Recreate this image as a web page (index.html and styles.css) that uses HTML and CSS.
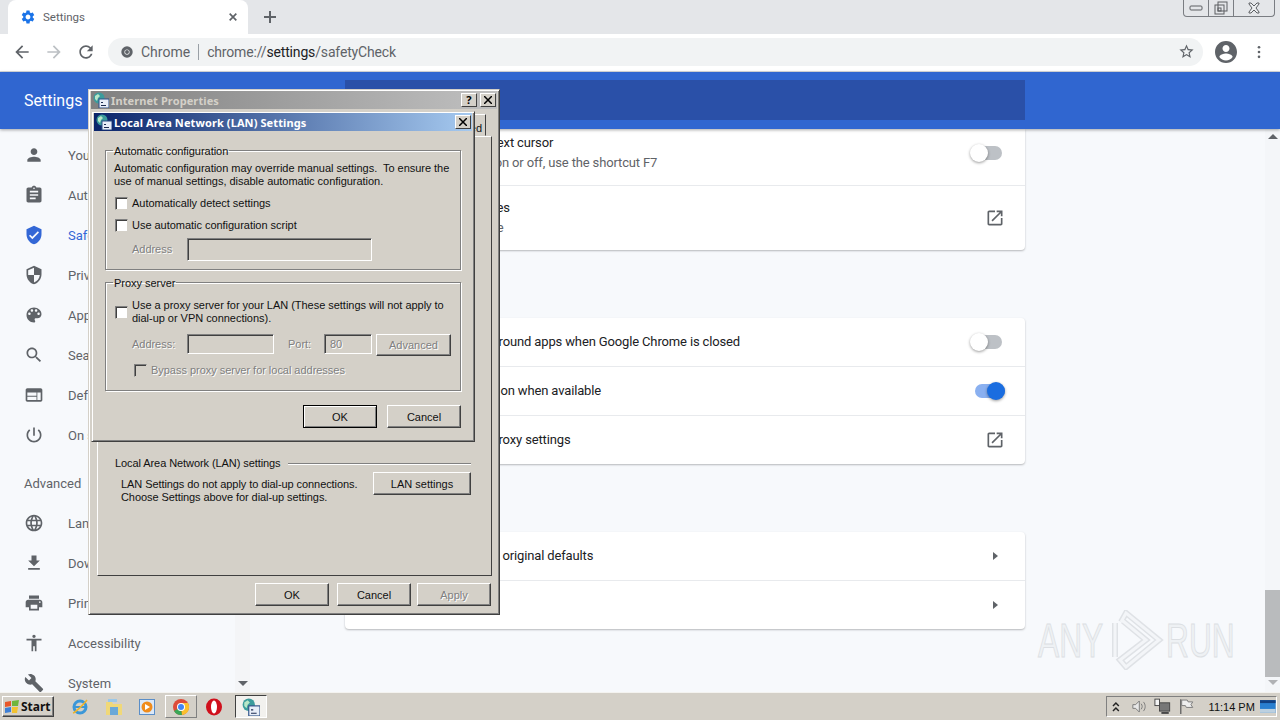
FILE: index.html
```html
<!DOCTYPE html>
<html>
<head>
    <title>Settings</title>
    <link rel="stylesheet" href="styles.css">
</head>
<body>
    <svg class="sprite">
        <symbol id="i-open" viewBox="0 0 24 24"><path d="M19 19H5V5h7V3H5c-1.11 0-2 .9-2 2v14c0 1.1.89 2 2 2h14c1.1 0 2-.9 2-2v-7h-2v7zM14 3v2h3.59l-9.83 9.83 1.41 1.41L19 6.41V10h2V3h-7z"/></symbol>
        <symbol id="i-winicon" viewBox="0 0 16 16">
            <circle cx="6" cy="6" r="5.5" fill="#3b9c9c"/>
            <path d="M2 4l3-2 2 2-2 2-1 3-2-2z" fill="#b8e6c8"/>
            <rect x="6" y="7" width="10" height="9" fill="#e8eef8" stroke="#2c4f86"/>
            <path d="M8 10h2v1H8zM8 13h5v1H8z" fill="#1c2c50"/>
        </symbol>
    </svg>

    <div class="tabstrip">
        <div class="tab">
            <svg class="tab-gear" viewBox="0 0 24 24"><path d="M19.14 12.94c.04-.3.06-.61.06-.94 0-.32-.02-.64-.07-.94l2.03-1.58c.18-.14.23-.41.12-.61l-1.92-3.32c-.12-.22-.37-.29-.59-.22l-2.39.96c-.5-.38-1.03-.7-1.62-.94l-.36-2.54c-.04-.24-.24-.41-.48-.41h-3.84c-.24 0-.43.17-.47.41l-.36 2.54c-.59.24-1.13.57-1.62.94l-2.39-.96c-.22-.08-.47 0-.59.22L2.74 8.87c-.12.21-.08.47.12.61l2.03 1.58c-.05.3-.09.63-.09.94s.02.64.07.94l-2.03 1.58c-.18.14-.23.41-.12.61l1.92 3.32c.12.22.37.29.59.22l2.39-.96c.5.38 1.03.7 1.62.94l.36 2.54c.05.24.24.41.48.41h3.84c.24 0 .44-.17.47-.41l.36-2.54c.59-.24 1.13-.56 1.62-.94l2.39.96c.22.08.47 0 .59-.22l1.92-3.32c.12-.22.07-.47-.12-.61l-2.01-1.58zM12 15.6c-1.98 0-3.6-1.62-3.6-3.6s1.62-3.6 3.6-3.6 3.6 1.62 3.6 3.6-1.62 3.6-3.6 3.6z"/></svg>
            <span class="tab-title">Settings</span>
            <svg class="tab-close" viewBox="0 0 12 12"><path d="M2 2l8 8M10 2l-8 8"/></svg>
        </div>
        <svg class="tab-new" viewBox="0 0 14 14"><path d="M7 1v12M1 7h12"/></svg>
        <div class="winctl">
            <div class="winctl-btn winctl-min"><svg viewBox="0 0 14 8"><rect x="1" y="2" width="12" height="4" rx="1"/></svg></div>
            <div class="winctl-btn winctl-res"><svg viewBox="0 0 14 14"><rect x="4" y="1" width="9" height="9"/><rect x="1" y="4" width="9" height="9"/><rect x="4" y="7" width="3" height="3"/></svg></div>
            <div class="winctl-btn winctl-cls"><svg viewBox="0 0 14 12"><path d="M2 1h2l3 3 3-3h2v1L9 6l3 4v1h-2L7 8l-3 3H2v-1l3-4-3-4z"/></svg></div>
        </div>
    </div>

    <div class="toolbar">
        <svg class="tb-icon" viewBox="0 0 24 24"><path d="M20 11H7.83l5.59-5.59L12 4l-8 8 8 8 1.41-1.41L7.83 13H20v-2z"/></svg>
        <svg class="tb-icon tb-off" viewBox="0 0 24 24"><path d="M12 4l-1.41 1.41L16.17 11H4v2h12.17l-5.58 5.59L12 20l8-8z"/></svg>
        <svg class="tb-icon" viewBox="0 0 24 24"><path d="M17.65 6.35C16.2 4.9 14.21 4 12 4c-4.42 0-7.99 3.58-7.99 8s3.57 8 7.99 8c3.73 0 6.84-2.55 7.73-6h-2.08c-.82 2.33-3.04 4-5.65 4-3.31 0-6-2.69-6-6s2.69-6 6-6c1.66 0 3.14.69 4.22 1.78L13 11h7V4l-2.35 2.35z"/></svg>
        <div class="omnibox">
            <svg class="omni-chrome" viewBox="0 0 16 16"><circle cx="8" cy="8" r="6.5" fill="#5f6368"/><circle cx="8" cy="8" r="3" fill="#f1f3f4"/><circle cx="8" cy="8" r="2.2" fill="#5f6368"/></svg>
            <span class="omni-label">Chrome</span>
            <span class="omni-sep"></span>
            <span class="omni-url">chrome://<b>settings</b>/safetyCheck</span>
            <svg class="omni-star" viewBox="0 0 24 24"><path d="M22 9.24l-7.19-.62L12 2 9.19 8.63 2 9.24l5.46 4.73L5.82 21 12 17.27 18.18 21l-1.63-7.03L22 9.24zM12 15.4l-3.76 2.27 1-4.28-3.32-2.88 4.38-.38L12 6.1l1.71 4.04 4.38.38-3.32 2.88 1 4.28L12 15.4z"/></svg>
        </div>
        <svg class="tb-avatar" viewBox="0 0 24 24"><path d="M12 1C5.9 1 1 5.9 1 12s4.900 11 11 11 11-4.900 11-11S18.100 1 12 1zm0 4c1.900 0 3.500 1.600 3.500 3.500S13.900 12 12 12s-3.500-1.600-3.500-3.500S10.100 5 12 5zm0 15.500c-2.700 0-5.200-1.400-6.600-3.500.1-2.200 4.400-3.400 6.600-3.400s6.500 1.200 6.600 3.400c-1.400 2.100-3.900 3.500-6.600 3.500z"/></svg>
        <svg class="tb-menu" viewBox="0 0 4 16"><circle cx="2" cy="2.500" r="1.500"/><circle cx="2" cy="8" r="1.500"/><circle cx="2" cy="13.500" r="1.500"/></svg>
    </div>

    <div class="header">
        <div class="header-title">Settings</div>
        <div class="header-search"></div>
    </div>

    <div class="page">
        <div class="sidebar">
            <div class="nav">
                <div class="nav-item"><svg viewBox="0 0 24 24"><path d="M12 12c2.210 0 4-1.790 4-4s-1.790-4-4-4-4 1.790-4 4 1.790 4 4 4zm0 2c-2.670 0-8 1.340-8 4v2h16v-2c0-2.660-5.330-4-8-4z"/></svg>You and Google</div>
                <div class="nav-item"><svg viewBox="0 0 24 24"><path d="M19 3h-4.180C14.400 1.840 13.300 1 12 1c-1.300 0-2.400.84-2.820 2H5c-1.100 0-2 .9-2 2v14c0 1.100.9 2 2 2h14c1.100 0 2-.9 2-2V5c0-1.100-.9-2-2-2zm-7 0c.55 0 1 .45 1 1s-.45 1-1 1-1-.45-1-1 .45-1 1-1zm2 14H7v-2h7v2zm3-4H7v-2h10v2zm0-4H7V7h10v2z"/></svg>Autofill</div>
                <div class="nav-item nav-active"><svg viewBox="0 0 24 24"><path d="M12 1L3 5v6c0 5.550 3.840 10.740 9 12 5.160-1.260 9-6.450 9-12V5l-9-4zm-2 16l-4-4 1.410-1.410L10 14.170l6.590-6.590L18 9l-8 8z"/></svg>Safety check</div>
                <div class="nav-item"><svg viewBox="0 0 24 24"><path d="M12 1L3 5v6c0 5.550 3.840 10.740 9 12 5.160-1.260 9-6.450 9-12V5l-9-4zm0 10.990h7c-.53 4.120-3.280 7.790-7 8.940V12H5V6.300l7-3.110v8.800z"/></svg>Privacy and security</div>
                <div class="nav-item"><svg viewBox="0 0 24 24"><path d="M12 3c-4.970 0-9 4.030-9 9s4.030 9 9 9c.83 0 1.500-.67 1.500-1.500 0-.39-.15-.74-.39-1.010-.23-.26-.38-.61-.38-.99 0-.83.67-1.500 1.500-1.500H16c2.760 0 5-2.240 5-5 0-4.420-4.030-8-9-8zm-5.500 9c-.83 0-1.500-.67-1.500-1.500S5.670 9 6.500 9 8 9.670 8 10.500 7.330 12 6.500 12zm3-4C8.670 8 8 7.330 8 6.500S8.670 5 9.500 5s1.500.67 1.500 1.500S10.330 8 9.500 8zm5 0c-.83 0-1.500-.67-1.500-1.500S13.670 5 14.500 5s1.500.67 1.500 1.500S15.330 8 14.500 8zm3 4c-.83 0-1.500-.67-1.500-1.500S16.670 9 17.500 9s1.500.67 1.500 1.500-.67 1.500-1.500 1.500z"/></svg>Appearance</div>
                <div class="nav-item"><svg viewBox="0 0 24 24"><path d="M15.500 14h-.79l-.28-.27C15.410 12.590 16 11.110 16 9.500 16 5.910 13.090 3 9.500 3S3 5.910 3 9.500 5.910 16 9.500 16c1.610 0 3.090-.59 4.230-1.570l.27.28v.79l5 4.990L20.490 19l-4.990-5zm-6 0C7.010 14 5 11.990 5 9.500S7.010 5 9.500 5 14 7.010 14 9.500 11.990 14 9.500 14z"/></svg>Search engine</div>
                <div class="nav-item"><svg viewBox="0 0 24 24"><path d="M20 4H4c-1.100 0-1.990.9-1.990 2L2 18c0 1.100.9 2 2 2h16c1.100 0 2-.9 2-2V6c0-1.100-.9-2-2-2zm-5 14H4v-4h11v4zm0-5H4V9h11v4zm5 5h-4V9h4v9z"/></svg>Default browser</div>
                <div class="nav-item"><svg viewBox="0 0 24 24"><path d="M13 3h-2v10h2V3zm4.830 2.170l-1.420 1.420C17.990 7.860 19 9.810 19 12c0 3.870-3.130 7-7 7s-7-3.130-7-7c0-2.190 1.010-4.140 2.580-5.420L6.170 5.170C4.230 6.820 3 9.260 3 12c0 4.970 4.030 9 9 9s9-4.030 9-9c0-2.740-1.230-5.180-3.170-6.830z"/></svg>On startup</div>
                <div class="nav-section">Advanced</div>
                <div class="nav-item"><svg viewBox="0 0 24 24"><path d="M11.990 2C6.470 2 2 6.480 2 12s4.470 10 9.990 10C17.520 22 22 17.520 22 12S17.520 2 11.990 2zm6.930 6h-2.950c-.32-1.250-.78-2.450-1.380-3.560 1.840.63 3.370 1.910 4.330 3.560zM12 4.040c.83 1.200 1.480 2.530 1.910 3.960h-3.820c.43-1.430 1.080-2.760 1.910-3.960zM4.260 14C4.100 13.360 4 12.690 4 12s.1-1.360.26-2h3.380c-.08.66-.14 1.320-.14 2 0 .68.06 1.340.14 2H4.260zm.82 2h2.950c.32 1.250.78 2.450 1.380 3.560-1.840-.63-3.370-1.900-4.330-3.560zm2.950-8H5.080c.96-1.660 2.490-2.930 4.330-3.560C8.810 5.550 8.350 6.750 8.030 8zM12 19.960c-.83-1.200-1.480-2.530-1.910-3.960h3.820c-.43 1.430-1.080 2.760-1.910 3.960zM14.340 14H9.660c-.09-.66-.16-1.320-.16-2 0-.68.07-1.350.16-2h4.680c.09.65.16 1.320.16 2 0 .68-.07 1.340-.16 2zm.25 5.560c.6-1.110 1.060-2.310 1.380-3.560h2.950c-.96 1.650-2.490 2.930-4.330 3.560zM16.360 14c.08-.66.14-1.320.14-2 0-.68-.06-1.340-.14-2h3.380c.16.64.26 1.310.26 2s-.1 1.360-.26 2h-3.380z"/></svg>Languages</div>
                <div class="nav-item"><svg viewBox="0 0 24 24"><path d="M19 9h-4V3H9v6H5l7 7 7-7zM5 18v2h14v-2H5z"/></svg>Downloads</div>
                <div class="nav-item"><svg viewBox="0 0 24 24"><path d="M19 8H5c-1.660 0-3 1.340-3 3v6h4v4h12v-4h4v-6c0-1.660-1.340-3-3-3zm-3 11H8v-5h8v5zm3-7c-.55 0-1-.45-1-1s.45-1 1-1 1 .45 1 1-.45 1-1 1zm-1-9H6v4h12V3z"/></svg>Printing</div>
                <div class="nav-item"><svg viewBox="0 0 24 24"><path d="M12 2c1.100 0 2 .9 2 2s-.9 2-2 2-2-.9-2-2 .9-2 2-2zm9 7h-6v13h-2v-6h-2v6H9V9H3V7h18v2z"/></svg>Accessibility</div>
                <div class="nav-item"><svg viewBox="0 0 24 24"><path d="M22.700 19l-9.100-9.100c.9-2.300.4-5-1.500-6.900-2-2-5-2.400-7.400-1.300L9 6 6 9 1.600 4.700C.4 7.100.9 10.100 2.900 12.100c1.900 1.900 4.600 2.400 6.900 1.500l9.100 9.100c.4.4 1 .4 1.400 0l2.300-2.300c.5-.4.5-1.100.1-1.400z"/></svg>System</div>
            </div>
            <div class="side-scroll"><span class="arrow-down"></span></div>
        </div>

        <div class="main">
            <div class="card">
                <div class="row row-first">
                    <div><div class="row-label">Navigate pages with a text cursor</div><div class="row-sub">To turn caret browsing on or off, use the shortcut F7</div></div>
                    <span class="toggle"></span>
                </div>
                <div class="row row-tall">
                    <div><div class="row-label">Add accessibility features</div><div class="row-sub">Open Chrome Web Store</div></div>
                    <svg class="row-open"><use href="#i-open"/></svg>
                </div>
            </div>
            <div class="card">
                <div class="row">
                    <div class="row-label">Continue running background apps when Google Chrome is closed</div>
                    <span class="toggle"></span>
                </div>
                <div class="row">
                    <div class="row-label">Use hardware acceleration when available</div>
                    <span class="toggle toggle-on"></span>
                </div>
                <div class="row">
                    <div class="row-label">Open your computer's proxy settings</div>
                    <svg class="row-open"><use href="#i-open"/></svg>
                </div>
            </div>
            <div class="card">
                <div class="row">
                    <div class="row-label">Restore settings to their original defaults</div>
                    <span class="caret"></span>
                </div>
                <div class="row">
                    <div class="row-label">Clean up computer</div>
                    <span class="caret"></span>
                </div>
            </div>
        </div>

        <div class="page-scroll">
            <span class="arrow-up"></span>
            <span class="page-thumb"></span>
            <span class="arrow-down"></span>
        </div>

        <div class="watermark">
            <span class="wm-text wm-any">ANY</span>
            <svg class="wm-logo" viewBox="0 0 52 60">
                <path class="wm-band" d="M3 13v34M9 12L14 3l33 27-33 27-6-7 26-20L11 11"/>
                <path class="wm-core" d="M3 13v34M9 12L14 3l33 27-33 27-6-7 26-20L11 11"/>
            </svg>
            <span class="wm-text wm-run">RUN</span>
        </div>
    </div>

    <div class="taskbar">
        <div class="start-btn">
            <svg viewBox="0 0 16 16"><path d="M1 3l6-1v5l-6 1z" fill="#e8572a"/><path d="M8 2l7-1-1 6-6 0z" fill="#6fb53c"/><path d="M1 9l6-1v5l-6 1z" fill="#3d7fd6"/><path d="M8 8h6l-1 6-5 0z" fill="#f2c230"/></svg>
            Start
        </div>
        <div class="quick">
            <span class="quick-item"><svg viewBox="0 0 18 18"><circle cx="9" cy="9" r="6" fill="none" stroke="#3b97d8" stroke-width="3"/><path d="M4 9h10" stroke="#3b97d8" stroke-width="2"/><path d="M2 15C5 14 13 6 16 2" fill="none" stroke="#f0b429" stroke-width="1.500"/></svg></span>
            <span class="quick-item"><svg viewBox="0 0 18 18"><path d="M1 4h6l1 2h9v11H1z" fill="#f0d878"/><path d="M5 9h8v8H5z" fill="#6aa8d8"/><path d="M3 1h9v3H3z" fill="#9cc8e8"/></svg></span>
            <span class="quick-item"><svg viewBox="0 0 18 18"><rect x="1.500" y="1.500" width="15" height="15" fill="#dbe8f8" stroke="#5a8ec8"/><circle cx="9" cy="9" r="5.500" fill="#f08c1c"/><path d="M7 6l5 3-5 3z" fill="#fff"/></svg></span>
            <span class="quick-item quick-raised"><svg viewBox="0 0 18 18"><circle cx="9" cy="9" r="8" fill="#dd4b39"/><path d="M9 9L2 13a8 8 0 0 0 8 4z" fill="#3aa757"/><path d="M9 5h7a8 8 0 0 1-6 12z" fill="#fbc02d"/><circle cx="9" cy="9" r="4" fill="#fff"/><circle cx="9" cy="9" r="3" fill="#4285f4"/></svg></span>
            <span class="quick-item"><svg viewBox="0 0 18 18"><ellipse cx="9" cy="9" rx="8" ry="8.500" fill="#d0101c"/><ellipse cx="9" cy="9" rx="3" ry="6.500" fill="#fff"/></svg></span>
            <span class="quick-item quick-active"><svg><use href="#i-winicon"/></svg></span>
        </div>
        <div class="tray">
            <svg class="tray-up" viewBox="0 0 8 10"><path d="M1 4l3-3 3 3M1 9l3-3 3 3"/></svg>
            <svg class="tray-icon" viewBox="0 0 18 18"><path d="M2 7h3l4-4v12l-4-4H2z" fill="#e8e8e8" stroke="#777"/><path d="M11 6c1.500 2 1.500 4 0 6M13.500 4c2.500 3 2.500 7 0 10" fill="none" stroke="#777"/></svg>
            <svg class="tray-icon" viewBox="0 0 18 18"><rect x="6" y="5" width="11" height="9" fill="#777" stroke="#444"/><rect x="1" y="1" width="5" height="7" fill="#f4f4f4" stroke="#444"/><path d="M8 16h8" stroke="#444" stroke-width="2"/></svg>
            <svg class="tray-icon" viewBox="0 0 18 18"><path d="M3 1v16" stroke="#666" stroke-width="1.500"/><path d="M4 2h6l1 2h5l-2 3 2 3h-7l-1-2H4z" fill="#eee" stroke="#777"/></svg>
            <span class="tray-time">11:14 PM</span>
            <svg class="tray-desk" viewBox="0 0 16 13"><rect width="16" height="13" fill="#2a7fd0"/><rect y="9" width="16" height="4" fill="#bcd0e0"/><rect width="16" height="3" fill="#123f80"/></svg>
        </div>
    </div>

    <div class="win win-props">
        <div class="titlebar titlebar-off">
            <svg class="title-icon"><use href="#i-winicon"/></svg>
            <span class="title-text">Internet Properties</span>
            <span class="title-btn">?</span>
            <span class="title-btn title-x"><svg viewBox="0 0 8 8"><path d="M0 0l8 8M8 0L0 8"/></svg></span>
        </div>
        <div class="tabs"><span class="prop-tab">Advanced</span></div>
        <div class="panel">
            <div class="panel-head"><span>Local Area Network (LAN) settings</span><i></i></div>
            <div class="panel-lan">
                <p>LAN Settings do not apply to dial-up connections.<br>Choose Settings above for dial-up settings.</p>
                <button class="btn btn-lan">LAN settings</button>
            </div>
        </div>
        <div class="btn-row">
            <button class="btn">OK</button>
            <button class="btn">Cancel</button>
            <button class="btn btn-off btn-apply">Apply</button>
        </div>
    </div>

    <div class="win win-lan">
        <div class="titlebar">
            <svg class="title-icon"><use href="#i-winicon"/></svg>
            <span class="title-text">Local Area Network (LAN) Settings</span>
            <span class="title-btn title-x"><svg viewBox="0 0 8 8"><path d="M0 0l8 8M8 0L0 8"/></svg></span>
        </div>
        <fieldset class="group group-auto">
            <legend>Automatic configuration</legend>
            <p class="group-note">Automatic configuration may override manual settings.&nbsp; To ensure the<br>use of manual settings, disable automatic configuration.</p>
            <div class="check-row"><span class="check"></span>Automatically detect settings</div>
            <div class="check-row"><span class="check"></span>Use automatic configuration script</div>
            <div class="field-row">
                <span class="off field-label">Address</span>
                <span class="input input-addr"></span>
            </div>
        </fieldset>
        <fieldset class="group group-proxy">
            <legend>Proxy server</legend>
            <div class="check-row check-two"><span class="check"></span><span>Use a proxy server for your LAN (These settings will not apply to<br>dial-up or VPN connections).</span></div>
            <div class="field-row field-proxy">
                <span class="off field-label">Address:</span>
                <span class="input input-proxy"></span>
                <span class="off port-label">Port:</span>
                <span class="input input-port off">80</span>
                <button class="btn btn-off btn-adv">Advanced</button>
            </div>
            <div class="check-row check-bypass off"><span class="check check-off"></span>Bypass proxy server for local addresses</div>
        </fieldset>
        <div class="btn-row btn-row-lan">
            <button class="btn btn-default">OK</button>
            <button class="btn">Cancel</button>
        </div>
    </div>
</body>
</html>
```

FILE: styles.css
```css
* {
    box-sizing: border-box;
}
html, body {
    margin: 0;
    height: 100%;
}
body {
    width: 1280px;
    height: 720px;
    overflow: hidden;
    display: flex;
    flex-direction: column;
    font-family: Roboto, "Liberation Sans", sans-serif;
    background: #f7f9fc;
}
.sprite {
    display: none;
}

/* browser chrome */
.tabstrip {
    height: 34px;
    flex: none;
    display: flex;
    align-items: center;
    background: #e4e6e9;
    padding-left: 8px;
    position: relative;
}
.tab {
    width: 240px;
    height: 34px;
    background: #fff;
    border-radius: 8px 8px 0 0;
    display: flex;
    align-items: center;
    padding: 0 10px 0 12px;
}
.tab-gear {
    width: 16px;
    height: 16px;
    fill: #1a73e8;
}
.tab-title {
    font-size: 11.5px;
    color: #5f6368;
    margin-left: 7px;
    flex: 1;
}
.tab-close {
    width: 10px;
    height: 10px;
    stroke: #5f6368;
    stroke-width: 2;
}
.tab-new {
    width: 14px;
    height: 14px;
    margin-left: 15px;
    stroke: #5f6368;
    stroke-width: 2;
}
.winctl {
    position: absolute;
    right: 5px;
    top: 0;
    width: 92px;
    height: 17px;
    display: flex;
    border: 1px solid #7a7d82;
    border-top: 0;
    border-radius: 0 0 4px 4px;
}
.winctl-btn {
    width: 25px;
    display: flex;
    align-items: center;
    justify-content: center;
    border-left: 1px solid #7a7d82;
}
.winctl-btn:first-child {
    border-left: 0;
}
.winctl-btn svg {
    width: 14px;
    height: 14px;
    fill: none;
    stroke: #5c5f63;
}
.winctl-cls {
    width: 42px;
}
.winctl-cls svg {
    fill: #eceef0;
}
.toolbar {
    height: 38px;
    flex: none;
    background: #fff;
    display: flex;
    align-items: center;
    padding: 0 0 2px 12px;
    border-bottom: 1px solid #d9dbde;
}
.tb-icon {
    width: 20px;
    height: 20px;
    fill: #5f6368;
    margin-right: 12px;
}
.tb-off {
    fill: #bcc0c4;
}
.omnibox {
    width: 1095px;
    height: 28px;
    background: #f1f3f4;
    border-radius: 14px;
    display: flex;
    align-items: center;
    padding: 0 8px 0 12px;
    font-size: 14px;
    color: #5f6368;
}
.omni-chrome {
    width: 14px;
    height: 14px;
}
.omni-label {
    margin-left: 7px;
}
.omni-sep {
    width: 1px;
    height: 16px;
    background: #9aa0a6;
    margin: 0 8px;
}
.omni-url {
    flex: 1;
    letter-spacing: -0.16px;
}
.omni-url b {
    font-weight: 400;
    color: #202124;
}
.omni-star {
    width: 17px;
    height: 17px;
    fill: #5f6368;
}
.tb-avatar {
    width: 24px;
    height: 24px;
    fill: #5f6368;
    margin-left: 11px;
}
.tb-menu {
    width: 4px;
    height: 14px;
    fill: #5f6368;
    margin-left: 19px;
}

/* settings page */
.header {
    height: 57px;
    flex: none;
    background: #3066d0;
    display: flex;
    align-items: center;
    padding-left: 24px;
    box-shadow: 0 1px 3px rgba(0,0,0,0.35);
    position: relative;
    z-index: 1;
}
.header-title {
    width: 321px;
    color: #fff;
    font-size: 16px;
}
.header-search {
    width: 680px;
    height: 40px;
    background: #2a50a8;
    margin-top: -1px;
}
.page {
    height: 563px;
    flex: none;
    display: flex;
    position: relative;
    overflow: hidden;
}
.sidebar {
    width: 250px;
    flex: none;
    display: flex;
}
.nav {
    width: 235px;
    padding-top: 6px;
}
.nav-item {
    height: 40px;
    display: flex;
    align-items: center;
    padding-left: 24px;
    font-size: 13px;
    color: #5f6368;
}
.nav-item svg {
    width: 20px;
    height: 20px;
    fill: #5f6368;
    margin-right: 24px;
}
.nav-active {
    color: #3367d6;
}
.nav-active svg {
    fill: #3367d6;
}
.nav-section {
    height: 40px;
    margin-top: 8px;
    display: flex;
    align-items: center;
    padding-left: 24px;
    font-size: 13px;
    color: #5f6368;
}
.side-scroll {
    width: 15px;
    background: #f4f5f7;
    display: flex;
    flex-direction: column;
    justify-content: flex-end;
    align-items: center;
    padding-bottom: 6px;
}
.main {
    flex: 1;
    padding: 0 0 0 95px;
}
.card {
    width: 680px;
    background: #fff;
    border-radius: 0 0 4px 4px;
    box-shadow: 0 1px 2px rgba(60,64,67,0.35);
    margin-bottom: 68px;
}
.card + .card {
    border-radius: 4px;
}
.row {
    height: 49px;
    display: flex;
    align-items: center;
    justify-content: space-between;
    padding: 0 20px;
    border-top: 1px solid #e8eaed;
    font-size: 13px;
    color: #202124;
}
.row:first-child {
    height: 48px;
    border-top: 0;
}
.row:first-child.row-first {
    height: 56px;
    padding-bottom: 8px;
}
.row-tall {
    height: 65px;
}
.row-label {
    line-height: 20px;
    letter-spacing: -0.14px;
}
.row-sub {
    line-height: 20px;
    color: #5f6368;
    letter-spacing: -0.14px;
}
.row-open {
    width: 20px;
    height: 20px;
    fill: #5f6368;
}
.toggle {
    height: 14px;
    border-radius: 7px;
    background: #bdc1c6;
    position: relative;
    margin-right: 3px;
    width: 27px;
}
.toggle::after {
    content: "";
    position: absolute;
    left: -5px;
    top: -2px;
    width: 18px;
    height: 18px;
    border-radius: 50%;
    background: #fff;
    box-shadow: 0 1px 3px rgba(0,0,0,0.4);
}
.toggle-on {
    background: #8ab0f0;
    margin-right: 0;
    width: 30px;
}
.toggle-on::after {
    left: auto;
    right: 0;
    background: #1a6de0;
}
.caret {
    width: 0;
    height: 0;
    border-left: 5px solid #5f6368;
    border-top: 4px solid transparent;
    border-bottom: 4px solid transparent;
    margin-right: 7px;
}
.page-scroll {
    width: 15px;
    flex: none;
    background: #f4f6f9;
    display: flex;
    flex-direction: column;
    align-items: center;
    justify-content: space-between;
    padding: 5px 0 7px;
    position: relative;
}
.page-thumb {
    position: absolute;
    left: 0;
    top: 461px;
    width: 15px;
    height: 87px;
    background: #b9bbbd;
}
.arrow-down {
    width: 0;
    height: 0;
    border-top: 5px solid #5f6368;
    border-left: 5px solid transparent;
    border-right: 5px solid transparent;
}
.page-scroll .arrow-down {
    border-top-color: #b0b2b5;
}
.arrow-up {
    width: 0;
    height: 0;
    border-bottom: 5px solid #5f6368;
    border-left: 5px solid transparent;
    border-right: 5px solid transparent;
}
.watermark {
    position: absolute;
    left: 1038px;
    top: 481px;
    width: 195px;
    height: 60px;
    display: flex;
    align-items: center;
}
.wm-text {
    font-family: "Liberation Sans", sans-serif;
    font-size: 48px;
    color: #eef1f4;
    -webkit-text-stroke: 1px #dcdfe3;
    transform-origin: left center;
    transform: scaleX(0.66);
    width: 66px;
    flex: none;
}
.wm-logo {
    width: 52px;
    height: 60px;
    flex: none;
    margin: 0 2px 0 8px;
}
.wm-band {
    fill: none;
    stroke: #dfe2e6;
    stroke-width: 6;
}
.wm-core {
    fill: none;
    stroke: #f3f5f8;
    stroke-width: 3;
}

/* taskbar */
.taskbar {
    flex: 1;
    background: #d4d0c8;
    border-top: 1px solid #f4f3f0;
    display: flex;
    align-items: center;
    padding: 0 3px 0 2px;
    position: relative;
}
.start-btn {
    width: 52px;
    height: 21px;
    display: flex;
    align-items: center;
    gap: 1px;
    padding-left: 1px;
    font-family: "Noto Sans", sans-serif;
    font-size: 12px;
    font-weight: 700;
    color: #111;
    border: 1px solid;
    border-color: #fff #404040 #404040 #fff;
    box-shadow: inset -1px -1px #808080;
}
.start-btn svg {
    width: 16px;
    height: 16px;
}
.quick {
    display: flex;
    align-items: center;
    margin-left: 10px;
    flex: 1;
}
.quick-item {
    width: 32px;
    height: 23px;
    margin-right: 1.500px;
    display: flex;
    align-items: center;
    justify-content: center;
}
.quick-item svg {
    width: 18px;
    height: 18px;
}
.quick-raised {
    border: 1px solid;
    border-color: #fff #808080 #808080 #fff;
}
.quick-active {
    margin-left: 3px;
    border: 1px solid;
    border-color: #404040 #fff #fff #404040;
    background: #f2f1ee;
}
.tray {
    width: 171px;
    height: 21px;
    display: flex;
    align-items: center;
    border: 1px solid;
    border-color: #808080 #fff #fff #808080;
    padding-left: 5px;
}
.tray-up {
    width: 8px;
    height: 10px;
    fill: none;
    stroke: #222;
    stroke-width: 1.500;
    margin-right: 11px;
}
.tray-icon {
    width: 17px;
    height: 17px;
    margin-right: 7px;
}
.tray-time {
    font-family: "Liberation Sans", sans-serif;
    font-size: 11px;
    color: #111;
    margin-left: 7px;
    width: 53px;
}
.tray-desk {
    width: 16px;
    height: 13px;
}

/* windows dialogs */
.win {
    position: absolute;
    z-index: 2;
    display: flex;
    flex-direction: column;
    background: #d4d0c8;
    border: 1px solid;
    border-color: #d4d0c8 #404040 #404040 #d4d0c8;
    box-shadow: inset 1px 1px #fff, inset -1px -1px #808080;
    padding: 1px 2px 2px;
    font-family: "Liberation Sans", sans-serif;
    font-size: 11px;
    line-height: 13px;
    letter-spacing: -0.03px;
    color: #111;
    white-space: nowrap;
}
.win p {
    margin: 0;
}
.win-props {
    left: 88px;
    top: 89px;
    width: 412px;
    height: 526px;
}
.win-lan {
    left: 91px;
    top: 111px;
    width: 384px;
    height: 331px;
    z-index: 3;
}
.titlebar {
    height: 18px;
    flex: none;
    display: flex;
    align-items: center;
    padding: 0 1px 0 2px;
    background: linear-gradient(90deg, #0a246a, #a6caf0);
    color: #fff;
    font-family: "Noto Sans", sans-serif;
    font-weight: 700;
    letter-spacing: 0.1px;
}
.titlebar-off {
    background: linear-gradient(90deg, #808080, #c0c0c0);
    color: #d4d0c8;
}
.title-icon {
    width: 16px;
    height: 16px;
    margin-right: 2px;
    flex: none;
}
.title-text {
    flex: 1;
}
.title-btn {
    width: 16px;
    height: 14px;
    margin-left: 3px;
    background: #d4d0c8;
    border: 1px solid;
    border-color: #fff #404040 #404040 #fff;
    color: #000;
    font-size: 11px;
    line-height: 12px;
    text-align: center;
    display: flex;
    align-items: center;
    justify-content: center;
}
.title-x svg {
    width: 8px;
    height: 8px;
    stroke: #000;
    stroke-width: 1.500;
}
.tabs {
    height: 27px;
    flex: none;
    display: flex;
    justify-content: flex-end;
    align-items: flex-end;
    padding-right: 11px;
}
.prop-tab {
    height: 22px;
    padding: 7px 3px 0 8px;
    background: #d4d0c8;
    border: 1px solid;
    border-color: #fff #404040 #d4d0c8 #fff;
}
.panel {
    height: 440px;
    flex: none;
    margin: 0 5px 0 6px;
    border: 1px solid;
    border-color: #fff #404040 #404040 #fff;
    padding-top: 320px;
    letter-spacing: -0.08px;
}
.panel-head {
    display: flex;
    align-items: center;
    padding: 0 20px 0 17px;
    gap: 7px;
}
.panel-head i {
    flex: 1;
    height: 1px;
    background: #808080;
    box-shadow: 0 1px #fff;
}
.panel-lan {
    display: flex;
    justify-content: space-between;
    padding: 2px 20px 0 23px;
}
.panel-lan p {
    margin-top: 6px;
}
.btn {
    width: 74px;
    height: 23px;
    padding: 0;
    background: #d4d0c8;
    border: 1px solid;
    border-color: #fff #404040 #404040 #fff;
    box-shadow: inset -1px -1px #808080;
    font-family: inherit;
    font-size: 11px;
    color: #111;
}
.btn-off {
    color: #808080;
    text-shadow: 1px 1px #fff;
}
.btn-lan {
    width: 98px;
}
.btn-default {
    border-color: #000;
    box-shadow: inset 1px 1px #fff, inset -1px -1px #808080;
}
.btn-row {
    display: flex;
    justify-content: flex-end;
    gap: 8px;
    margin-top: 7px;
    padding-right: 6px;
}
.btn-apply {
    margin-left: -2px;
}
.btn-row-lan {
    margin-top: 14px;
    padding-right: 11px;
    gap: 10px;
}
.group {
    margin: 12px 11px 0 11px;
    padding: 4px 8px 8px 8px;
    border: 1px solid #808080;
    box-shadow: 1px 1px #fff, inset 1px 1px #fff;
    min-width: 0;
}
.group legend {
    padding: 2px 1px 0;
    margin-left: -1px;
}
.group-proxy {
    margin-top: 5px;
    padding-bottom: 9px;
}
.group-note {
    margin-left: 1px;
}
.check-row {
    display: flex;
    align-items: center;
    height: 22px;
}
.group-note + .check-row {
    margin-top: 4px;
}
.check {
    width: 13px;
    height: 13px;
    flex: none;
    margin: 0 4px 0 1px;
    background: #fff;
    border: 1px solid;
    border-color: #808080 #d4d0c8 #d4d0c8 #808080;
    box-shadow: inset 1px 1px #404040;
}
.check-off {
    background: #d4d0c8;
}
.check-two {
    height: 26px;
    margin-top: 5px;
}
.check-bypass {
    margin: 5px 0 0 19px;
}
.field-row {
    display: flex;
    align-items: center;
    margin: 2px 0 0 18px;
}
.field-proxy {
    height: 20px;
    margin-top: 9px;
}
.field-label {
    width: 55px;
}
.off {
    color: #808080;
    text-shadow: 1px 1px #fff;
}
.input {
    height: 23px;
    background: #d4d0c8;
    border: 1px solid;
    border-color: #808080 #fff #fff #808080;
    box-shadow: inset 1px 1px #404040;
}
.input-addr {
    width: 185px;
}
.input-proxy {
    width: 87px;
    height: 20px;
}
.port-label {
    margin-left: 14px;
    width: 36px;
}
.input-port {
    width: 48px;
    height: 20px;
    padding: 3px 0 0 5px;
}
.btn-adv {
    width: 75px;
    height: 22px;
    margin-left: 4px;
    align-self: flex-start;
}
```
